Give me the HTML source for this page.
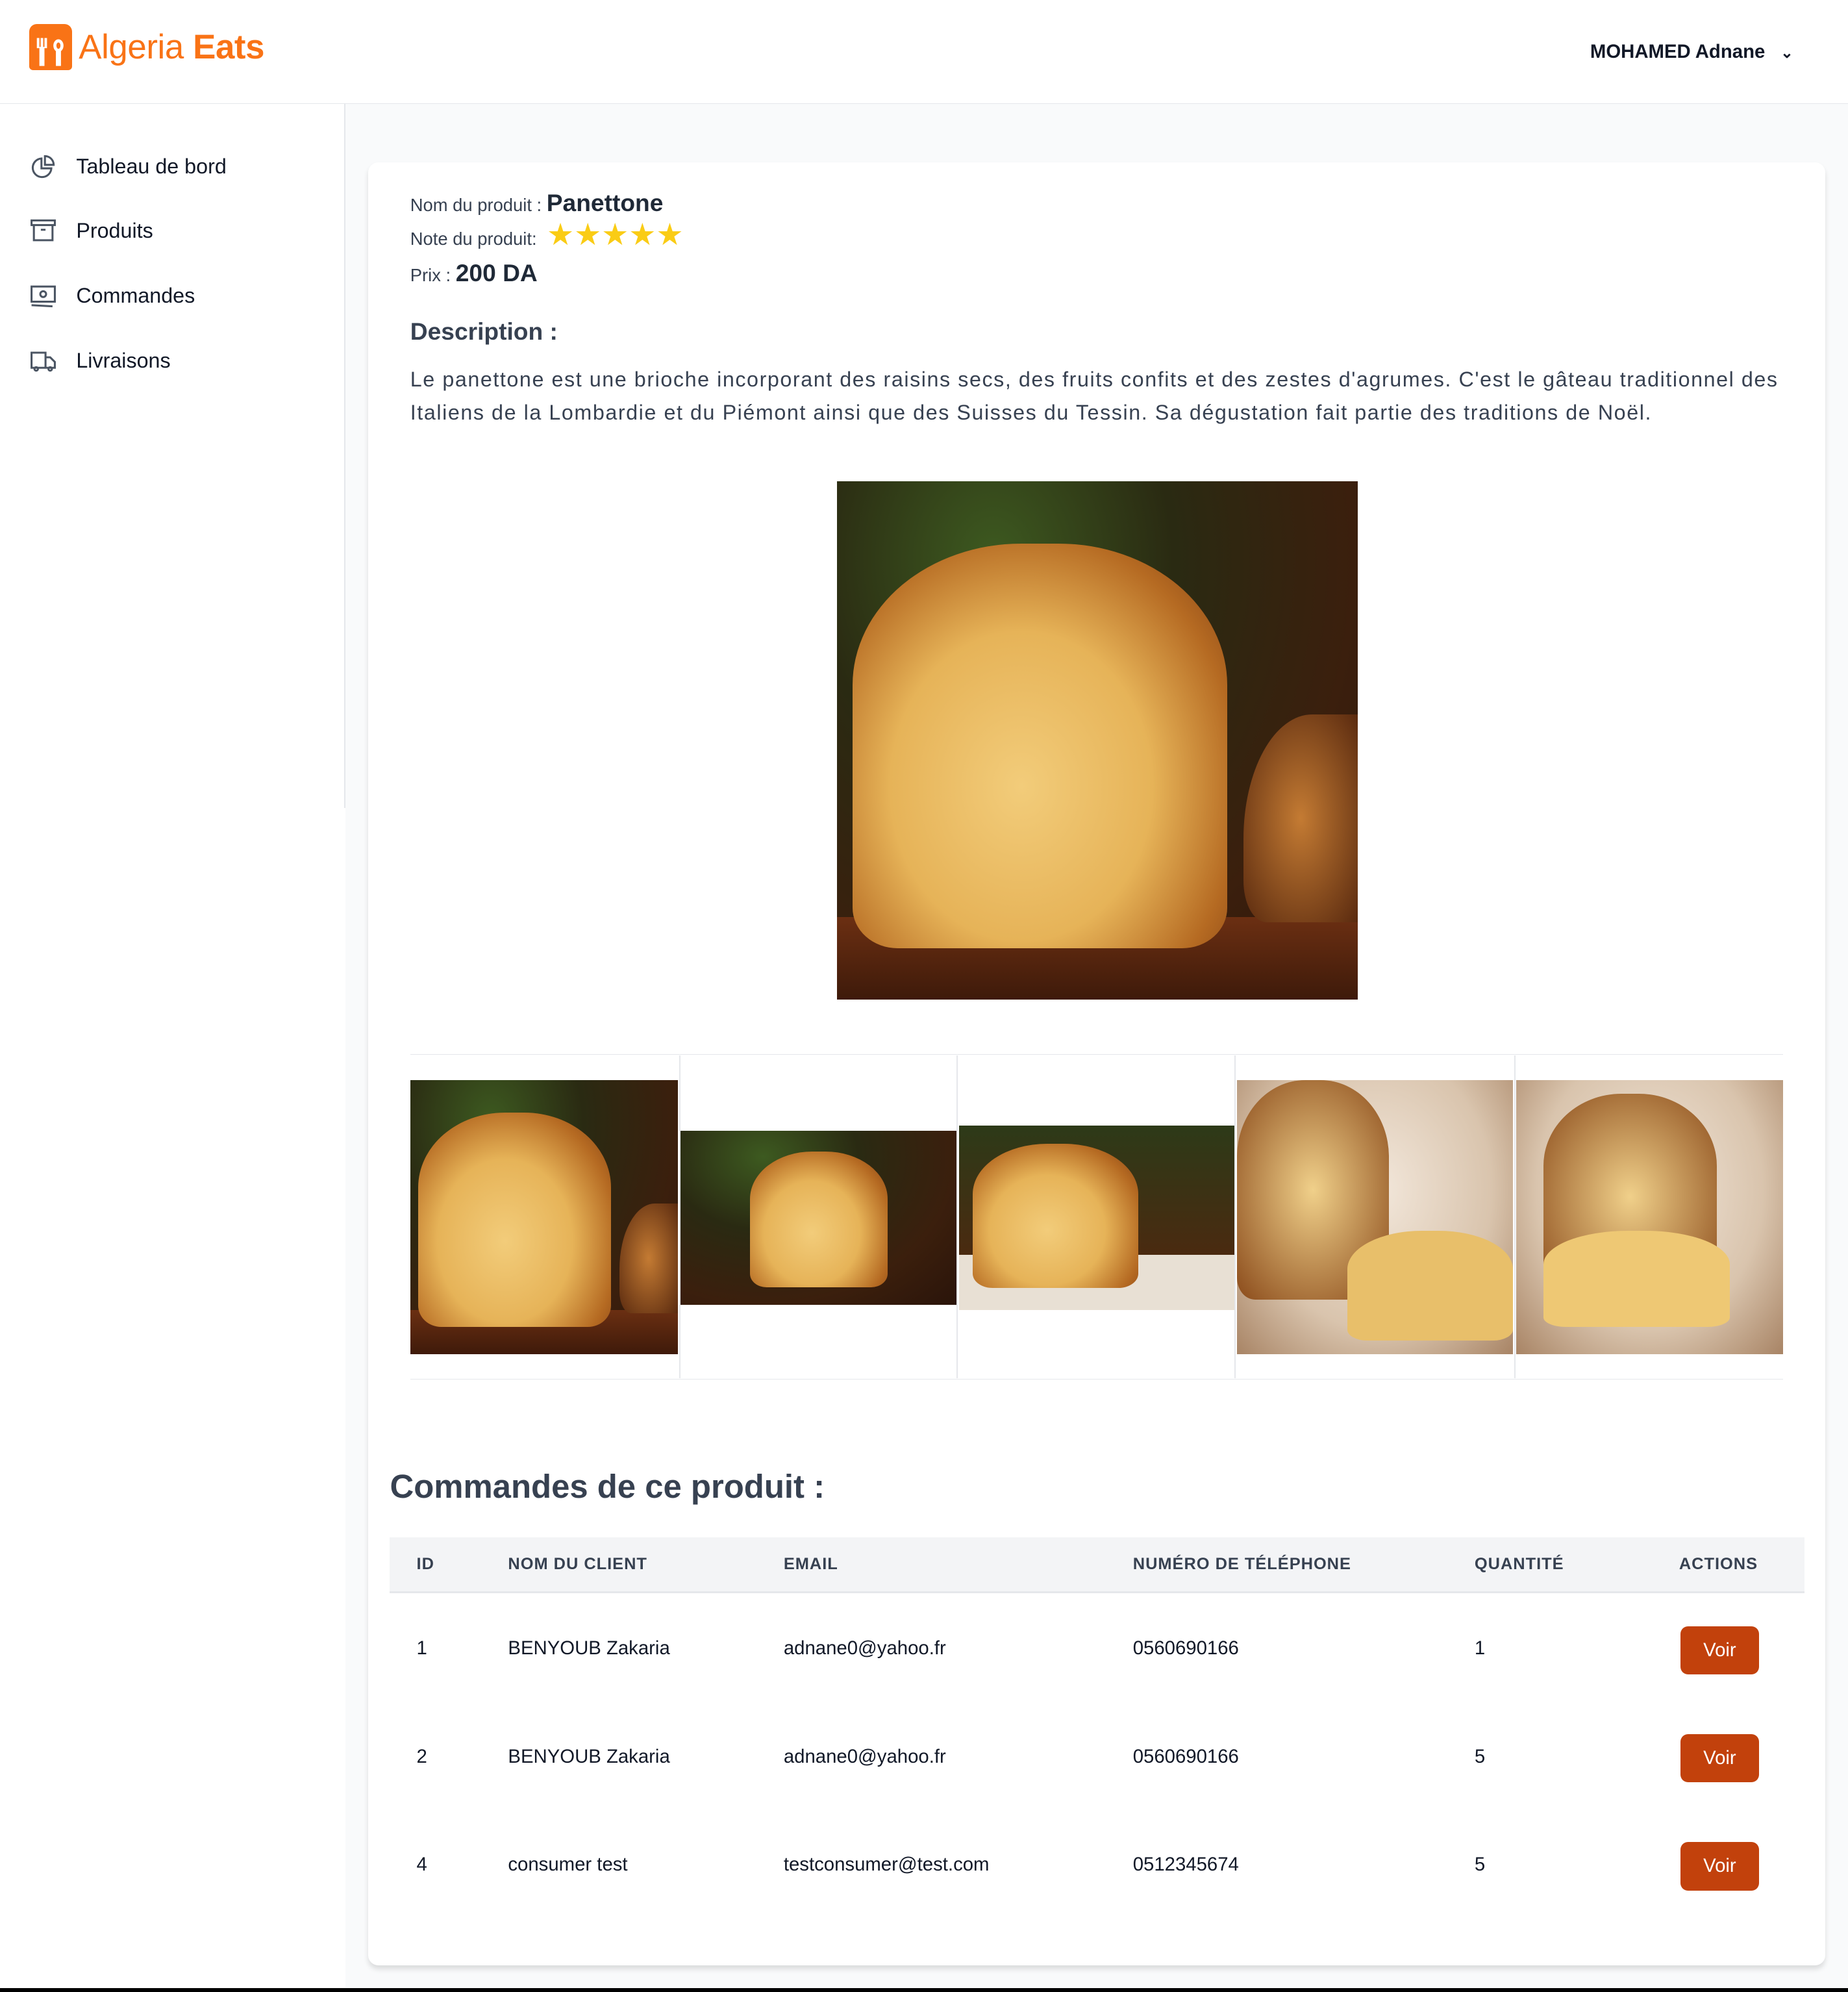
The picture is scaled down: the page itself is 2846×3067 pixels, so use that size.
<!DOCTYPE html>
<html><head><meta charset="utf-8">
<style>
*{box-sizing:border-box;margin:0;padding:0}
html,body{width:2846px;height:3067px;overflow:hidden;background:#000}
#w{zoom:1.95601;width:1455px;height:1568px;position:relative;background:#f9fafb;font-family:"Liberation Sans",sans-serif;color:#1f2937}
.hdr{position:absolute;left:0;top:0;width:1455px;height:82px;background:#fff;border-bottom:1px solid #e5e7eb}
.logo{position:absolute;left:23px;top:19px;display:flex;align-items:center}
.logo .ic{width:34px;height:36px;background:#f97316;border-radius:6px 6px 3px 3px;position:relative}
.logo span{font-size:27px;color:#f97316;margin-left:5px;letter-spacing:-0.2px}
.user{position:absolute;left:1252px;top:32px;font-size:15px;font-weight:bold;color:#111827;white-space:nowrap}
.side{position:absolute;left:0;top:82px;width:272px;height:1486px;background:#fff}
.side .bd{position:absolute;right:0;top:0;width:1px;height:554px;background:#e5e7eb}
.nav{position:absolute;left:23px;display:flex;align-items:center;font-size:16.5px;color:#111827}
.nav svg{margin-right:15px}
.card{position:absolute;left:290px;top:128px;width:1147px;height:1419px;background:#fff;border-radius:8px;box-shadow:0 3px 4px rgba(0,0,0,.12)}
.lbl{position:absolute;left:323px;font-size:14px;color:#374151;white-space:nowrap}
.lbl b{font-size:19px;color:#1f2937;font-weight:bold}
.star{color:#facc15;font-size:24px;letter-spacing:0px;line-height:14px}
p.desc{position:absolute;left:323px;top:286px;width:1092px;font-size:16.5px;letter-spacing:0.8px;line-height:26px;color:#374151}
.bread{position:absolute;overflow:hidden;background:radial-gradient(ellipse at 30% 15%,#3d5a20 0,#2a2a12 35%,#3b1f0d 70%,#2a140a 100%)}
.bread .loaf{position:absolute;left:3%;top:12%;width:72%;height:78%;border-radius:45% 45% 12% 12%/35% 35% 10% 10%;background:radial-gradient(ellipse at 45% 60%,#f2cc7a 0,#e6b358 45%,#b56a22 75%,#7a3a12 100%)}
.bread .board{position:absolute;left:0;right:0;bottom:0;height:16%;background:linear-gradient(#6b2f12,#3e1a0a)}
.bread .slice{position:absolute;right:0;top:45%;width:22%;height:40%;border-radius:60% 0 0 20%;background:radial-gradient(#c47b33,#5a2a0f)}
.th{position:absolute;top:830px;height:256px;border-top:1px solid #e5e7eb;border-bottom:1px solid #e5e7eb}
.lt{background:radial-gradient(ellipse at 50% 40%,#f3e8dc 0,#d9c4ad 60%,#a88465 100%)}
h2{position:absolute;left:307px;top:1155px;font-size:26px;font-weight:bold;color:#374151}
.thead{position:absolute;left:307px;top:1210px;width:1114px;height:44px;background:#f3f4f6;border-bottom:2px solid #e5e7eb}
.c{position:absolute;font-size:13px;white-space:nowrap}
.thead .c{top:14px;font-weight:bold;color:#374151;letter-spacing:.5px}
.row .c{font-size:15px;color:#111827}
.btn{position:absolute;left:1323px;width:62px;height:38px;background:#c2410c;color:#fff;border-radius:6px;font-size:15px;text-align:center;line-height:38px}
.blk{position:absolute;left:0;top:1565px;width:1455px;height:3px;background:#000}
</style></head><body><div id="w">
<div class="hdr">
 <div class="logo"><div class="ic"><svg width="34" height="36" viewBox="0 0 34 36"><g fill="#fff"><rect x="6" y="11" width="2" height="8"/><rect x="9" y="11" width="2" height="8"/><rect x="12" y="11" width="2" height="8"/><rect x="8" y="18" width="4" height="15"/><ellipse cx="23" cy="17" rx="4" ry="5"/><rect x="21" y="20" width="4" height="13"/></g><ellipse cx="23" cy="17" rx="1.6" ry="2.5" fill="#f97316"/></svg></div><span>Algeria <b>Eats</b></span></div>
 <div class="user">MOHAMED Adnane <span style="margin-left:8px;font-size:12px">&#8964;</span></div>
</div>
<div class="side"><div class="bd"></div>
 <div class="nav" style="top:38px"><svg width="22" height="22" viewBox="0 0 24 24" fill="none" stroke="#4b5563" stroke-width="1.7"><path d="M10.5 5A8 8 0 1 0 19 13.5H10.5Z"/><path d="M13.5 3v7.5H21A7.5 7.5 0 0 0 13.5 3Z"/></svg>Tableau de bord</div>
 <div class="nav" style="top:89px"><svg width="22" height="22" viewBox="0 0 24 24" fill="none" stroke="#4b5563" stroke-width="1.7"><rect x="2" y="3" width="20" height="4"/><path d="M4 7v13h16V7M10 11h4"/></svg>Produits</div>
 <div class="nav" style="top:140px"><svg width="22" height="22" viewBox="0 0 24 24" fill="none" stroke="#4b5563" stroke-width="1.7"><rect x="2" y="4" width="20" height="13"/><circle cx="12" cy="10.5" r="2.5"/><path d="M2 20l18 1"/></svg>Commandes</div>
 <div class="nav" style="top:191px"><svg width="22" height="22" viewBox="0 0 24 24" fill="none" stroke="#4b5563" stroke-width="1.7"><path d="M2 5h12v13H2zM14 9h4l4 4v5h-8"/><circle cx="6" cy="19" r="1.5"/><circle cx="18" cy="19" r="1.5"/></svg>Livraisons</div>
</div>
<div class="card"></div>
<div class="lbl" style="top:149px">Nom du produit : <b>Panettone</b></div>
<div class="lbl" style="top:178px">Note du produit: <span class="star" style="margin-left:4px">★★★★★</span></div>
<div class="lbl" style="top:204px">Prix : <b>200 DA</b></div>
<div class="lbl" style="top:250px;font-size:19px;font-weight:bold;color:#374151">Description :</div>
<p class="desc">Le panettone est une brioche incorporant des raisins secs, des fruits confits et des zestes d'agrumes. C'est le gâteau traditionnel des Italiens de la Lombardie et du Piémont ainsi que des Suisses du Tessin. Sa dégustation fait partie des traditions de Noël.</p>
<div class="bread" style="left:659px;top:379px;width:410px;height:408px"><div class="board"></div><div class="loaf"></div><div class="slice"></div></div>
<div class="th" style="left:323px;width:1081px"></div>
<div class="bread" style="left:323px;top:850px;width:211px;height:216px"><div class="board"></div><div class="loaf"></div><div class="slice"></div></div>
<div style="position:absolute;left:535px;top:831px;width:1px;height:254px;background:#e5e7eb"></div>
<div class="bread" style="left:536px;top:890px;width:217px;height:137px"><div class="loaf" style="left:25%;width:50%"></div></div>
<div style="position:absolute;left:753px;top:831px;width:1px;height:254px;background:#e5e7eb"></div>
<div class="bread" style="left:755px;top:886px;width:217px;height:145px;background:linear-gradient(#2d3a18,#4a2a10 70%,#e8e0d4 70%)"><div class="loaf" style="left:5%;width:60%;top:10%"></div></div>
<div style="position:absolute;left:972px;top:831px;width:1px;height:254px;background:#e5e7eb"></div>
<div class="bread lt" style="left:974px;top:850px;width:217px;height:216px"><div class="loaf" style="left:0;width:55%;top:0;height:80%;background:radial-gradient(#f0d08a,#8a4a1a)"></div><div class="loaf" style="left:40%;width:60%;top:55%;height:40%;background:#e8bf6a"></div></div>
<div style="position:absolute;left:1192px;top:831px;width:1px;height:254px;background:#e5e7eb"></div>
<div class="bread lt" style="left:1194px;top:850px;width:210px;height:216px"><div class="loaf" style="left:10%;width:65%;top:5%;height:75%;background:radial-gradient(#f0d08a,#8a4a1a)"></div><div class="loaf" style="left:10%;width:70%;top:55%;height:35%;background:#eec874"></div></div>
<h2>Commandes de ce produit :</h2>
<div class="thead"><div class="c" style="left:21px">ID</div><div class="c" style="left:93px">NOM DU CLIENT</div><div class="c" style="left:310px">EMAIL</div><div class="c" style="left:585px">NUMÉRO DE TÉLÉPHONE</div><div class="c" style="left:854px">QUANTITÉ</div><div class="c" style="left:1015px">ACTIONS</div></div>
<div class="row" style="position:absolute;left:307px;top:1289px"><div class="c" style="left:21px">1</div><div class="c" style="left:93px">BENYOUB Zakaria</div><div class="c" style="left:310px">adnane0@yahoo.fr</div><div class="c" style="left:585px">0560690166</div><div class="c" style="left:854px">1</div></div>
<div class="btn" style="top:1280px">Voir</div>
<div class="row" style="position:absolute;left:307px;top:1374px"><div class="c" style="left:21px">2</div><div class="c" style="left:93px">BENYOUB Zakaria</div><div class="c" style="left:310px">adnane0@yahoo.fr</div><div class="c" style="left:585px">0560690166</div><div class="c" style="left:854px">5</div></div>
<div class="btn" style="top:1365px">Voir</div>
<div class="row" style="position:absolute;left:307px;top:1459px"><div class="c" style="left:21px">4</div><div class="c" style="left:93px">consumer test</div><div class="c" style="left:310px">testconsumer@test.com</div><div class="c" style="left:585px">0512345674</div><div class="c" style="left:854px">5</div></div>
<div class="btn" style="top:1450px">Voir</div>
<div class="blk"></div>
</div></body></html>
